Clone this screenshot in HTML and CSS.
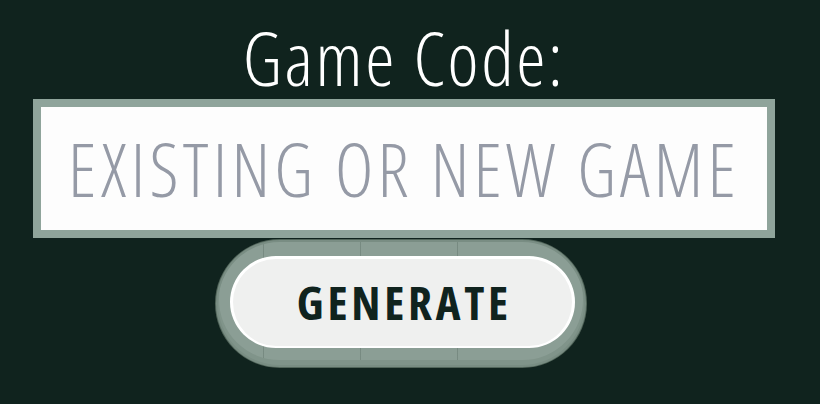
FILE: index.html
```html
<!DOCTYPE html>
<html lang="en">
<head>
<meta charset="utf-8">
<title>Game Code</title>
<link rel="stylesheet" href="styles.css">
</head>
<body>
<main class="panel">
  <label class="title" for="code">Game Code:</label>
  <input class="code-input" id="code" type="text" placeholder="EXISTING OR NEW GAME">
  <div class="btn-ring">
    <button class="btn" type="button">GENERATE</button>
  </div>
</main>
</body>
</html>
```
FILE: styles.css
```css
html, body {
  margin: 0;
  padding: 0;
  background: #10231e;
}
body {
  width: 820px;
  height: 404px;
  overflow: hidden;
  font-family: "Open Sans", "Noto Sans", sans-serif;
}
.panel {
  width: 742px;
  margin-left: 33px;
  padding-top: 21px;
  display: flex;
  flex-direction: column;
  align-items: center;
}
.title {
  display: block;
  color: #ffffff;
  font-size: 74px;
  line-height: 74px;
  font-weight: 300;
  font-stretch: 80%;
  letter-spacing: 2.6px;
  white-space: nowrap;
}
.code-input {
  box-sizing: border-box;
  margin: 4px 0 0 0;
  width: 742px;
  height: 139px;
  border: 8px solid #8fa49b;
  border-radius: 0;
  background: #fdfdfd;
  padding: 0;
  outline: none;
  text-align: center;
  font-family: "Open Sans", "Noto Sans", sans-serif;
  font-size: 73px;
  font-weight: 300;
  font-stretch: 80%;
  letter-spacing: 4.2px;
  color: #10231e;
}
.code-input::placeholder {
  color: #959aa6;
  opacity: 1;
}
.btn-ring {
  box-sizing: border-box;
  margin-top: 2px;
  margin-left: -6px;
  width: 370px;
  height: 127px;
  padding: 16px 11px 19px 14px;
  border-radius: 64px;
  background-color: #8b9e95;
  background-image:
    linear-gradient(to right, transparent 47px, rgba(30,50,40,.18) 47px, rgba(30,50,40,.18) 48px, transparent 48px),
    linear-gradient(to right, transparent 144px, rgba(30,50,40,.18) 144px, rgba(30,50,40,.18) 145px, transparent 145px),
    linear-gradient(to right, transparent 241px, rgba(30,50,40,.18) 241px, rgba(30,50,40,.18) 242px, transparent 242px);
  box-shadow: inset 0 0 0 2px #798d83, inset 0 -4px 0 3px #80948a, 0 0 0 1px #52665b;
}
.btn {
  box-sizing: border-box;
  display: block;
  width: 345px;
  height: 92px;
  border: 3px solid #ffffff;
  border-bottom-width: 2px;
  border-radius: 46px;
  background: #eff0ef;
  color: #10231e;
  font-family: "Open Sans", "Noto Sans", sans-serif;
  font-size: 47px;
  font-weight: 700;
  font-stretch: 75%;
  letter-spacing: 3.7px;
  text-indent: 3.7px;
  line-height: 1;
  padding: 0;
  cursor: pointer;
}
```
